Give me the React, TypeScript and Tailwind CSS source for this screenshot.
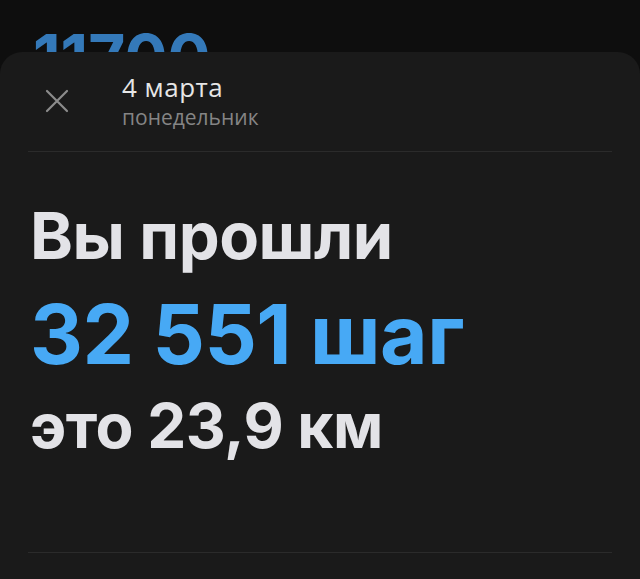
export default function App() {
  return (
    <div className="relative h-[579px] w-[640px] overflow-hidden bg-[#0e0e0e] font-['Inter',sans-serif]">
      {/* content behind the sheet */}
      <div className="flex items-start pl-[33px] pt-[26px]">
        <span className="text-[64px] font-bold leading-none text-[#3479b9]">11700</span>
        <span className="ml-[80px] mt-[22px] text-[26px] font-semibold leading-none text-[#4a4a4a]">шагов</span>
      </div>

      {/* bottom sheet */}
      <div className="absolute inset-x-0 top-[52px] bottom-0 rounded-t-[22px] bg-[#1a1a1a] px-[28px]">
        <div className="flex items-start pt-[18px] pb-[21px] border-b border-[#2b2b2b]">
          <button className="mt-[19px] ml-[17px] flex h-[24px] w-[24px] items-center justify-center text-[#8c8c8c]">
            <svg width="24" height="24" viewBox="0 0 24 24" fill="none" stroke="currentColor" strokeWidth="2.2" strokeLinecap="round">
              <path d="M2 2L22 22M22 2L2 22" />
            </svg>
          </button>
          <div className="ml-[53px] flex flex-col font-['Open_Sans',sans-serif]">
            <span className="text-[26px] leading-[34px] tracking-[0.5px] text-[#e6e6e6]">4 марта</span>
            <span className="text-[21px] leading-[26px] text-[#858585]">понедельник</span>
          </div>
        </div>

        <div className="flex flex-col pt-[44px] pl-[2px] font-bold tracking-[-0.5px]">
          <span className="text-[65px] leading-[80px] text-[#e3e3e7]">Вы прошли</span>
          <span className="mt-[9px] text-[82px] leading-[100px] text-[#47a9f5]">32 551 шаг</span>
          <span className="mt-[5px] text-[62px] leading-[72px] text-[#e3e3e7]">это 23,9 км</span>
        </div>

        <div className="mt-[90px] border-b border-[#2b2b2b]" />
      </div>
    </div>
  );
}
